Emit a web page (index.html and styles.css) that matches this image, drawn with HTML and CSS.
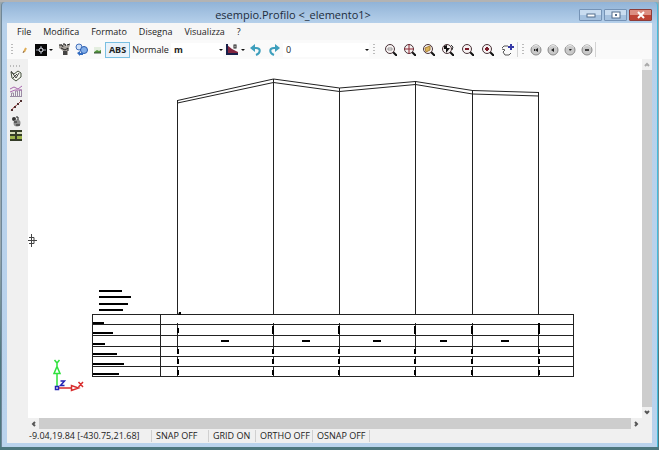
FILE: index.html
```html
<!DOCTYPE html>
<html lang="it">
<head>
<meta charset="utf-8">
<title>esempio.Profilo</title>
<link rel="stylesheet" href="styles.css">
</head>
<body>
<svg class="defs" aria-hidden="true">
  <defs>
    <g id="lens"><path d="M9 9l4 4" stroke="#111" stroke-width="2"/><circle cx="6" cy="6" r="4.500" fill="#f6f1f1" stroke="#4a3338"/></g>
    <g id="disc"><circle cx="6" cy="6" r="5" fill="#c9c9c9" stroke="#888"/><path d="M2 3.500a5 5 0 0 1 8 0" fill="none" stroke="#eee"/></g>
  </defs>
</svg>
<div class="window">
  <header class="titlebar">
    <h1>esempio.Profilo &lt;_elemento1&gt;</h1>
    <div class="controls">
      <button class="control" aria-label="Riduci"><svg width="12" height="8" viewBox="0 0 12 8"><rect x="2" y="3" width="8" height="3" fill="#fff" stroke="#526c8b"/></svg></button>
      <button class="control" aria-label="Ingrandisci"><svg width="12" height="8" viewBox="0 0 12 8"><rect x="2" y="1" width="8" height="6" fill="#fff" stroke="#526c8b"/><rect x="5" y="3" width="2" height="2" fill="#526c8b"/></svg></button>
      <button class="control close" aria-label="Chiudi"><svg width="12" height="8" viewBox="0 0 12 8"><path d="M3 1l6 6M9 1L3 7" stroke="#fff" stroke-width="2"/></svg></button>
    </div>
  </header>
  <div class="client">
    <nav class="menu">
      <button>File</button><button>Modifica</button><button>Formato</button><button>Disegna</button><button>Visualizza</button><button>?</button>
    </nav>
    <div class="toolbar">
      <span class="grip"></span>
      <button class="tool" aria-label="Matita"><svg width="8" height="12" viewBox="0 0 8 12"><path d="M3 8l2-4" stroke="#e0ad55" stroke-width="2"/><path d="M2 9l1-2" stroke="#8b6b4a"/></svg></button>
      <button class="tool" aria-label="Punto"><svg width="12" height="12" viewBox="0 0 12 12"><path d="M0 0h12v12H0z" fill="#080808"/><path d="M1 6h10M6 2v8" stroke="#9da4b3"/><circle cx="6" cy="6" r="2" fill="#080808" stroke="#e8ecf5"/></svg></button>
      <button class="drop" aria-label="Opzioni punto"></button>
      <button class="tool wide" aria-label="Sposta"><svg width="13" height="13" viewBox="0 0 13 13"><path d="M1 2l3-1 1 3V1h2l1 3 2-3 2 1-2 5v5H5V8L1 5z" fill="#a5a09a"/><path d="M1 2h3l1 2M5 1h2l1 2M9 2l3-1M3 5l4 2 3-2M10 5v3" fill="none" stroke="#222"/><path d="M5 8h4v4H5z" fill="#444"/></svg></button>
      <button class="tool" aria-label="Sfere"><svg width="13" height="13" viewBox="0 0 13 13"><circle cx="4" cy="4" r="3" fill="#cfe1f8" stroke="#4370bb"/><circle cx="9" cy="7" r="3.500" fill="#82aee9" stroke="#2a5cae"/><path d="M2 10l3-2v2h3v2H5v1z" fill="#316bc0"/></svg></button>
      <button class="tool" aria-label="Immagine"><svg width="9" height="8" viewBox="0 0 9 8"><path d="M1 1h7v4H1z" fill="#e4eee0"/><path d="M1 6l3-2 2 1 2-1v3H1z" fill="#51943b"/><path d="M1 7h7" stroke="#3f5140"/></svg></button>
      <button class="abs">ABS</button>
      <button class="style">Normale</button>
      <label class="combo unit"><select aria-label="Unità"><option>m</option></select></label>
      <button class="tool wide" aria-label="Quota"><svg width="12" height="12" viewBox="0 0 12 12"><path d="M1 0v11h11V8L6 5 1 1z" fill="#82243f"/><path d="M1 0v10h11" fill="none" stroke="#18204a" stroke-width="2"/><rect x="8" y="1" width="2" height="3" fill="none" stroke="#222"/></svg></button>
      <button class="drop" aria-label="Opzioni quota"></button>
      <button class="tool wide" aria-label="Annulla"><svg width="12" height="12" viewBox="0 0 12 12"><path d="M3 4h3c5 0 5 5 0 7" fill="none" stroke="#3e9fbd" stroke-width="2"/><path d="M5 0v8L0 4z" fill="#3e9fbd"/></svg></button>
      <button class="tool wide" aria-label="Ripeti"><svg width="12" height="12" viewBox="0 0 12 12"><path d="M9 4H6c-5 0-5 5 0 7" fill="none" stroke="#3e9fbd" stroke-width="2"/><path d="M7 0v8l5-4z" fill="#3e9fbd"/></svg></button>
      <label class="combo layer"><select aria-label="Livello"><option>0</option></select></label>
      <span class="grip spaced"></span>
      <button class="tool zoom" aria-label="Zoom finestra"><svg width="13" height="13" viewBox="0 0 13 13"><use href="#lens"/><path d="M4 5h4v2H4z" fill="none" stroke="#999"/></svg></button>
      <button class="tool zoom" aria-label="Zoom tutto"><svg width="13" height="13" viewBox="0 0 13 13"><use href="#lens"/><path d="M6 1v10M1 6h10" stroke="#8e2431"/></svg></button>
      <button class="tool zoom" aria-label="Zoom oggetto"><svg width="13" height="13" viewBox="0 0 13 13"><use href="#lens"/><path d="M3 5l5-2v4L4 9z" fill="#ddb456" stroke="#a87f38"/></svg></button>
      <button class="tool zoom" aria-label="Zoom precedente"><svg width="13" height="13" viewBox="0 0 13 13"><use href="#lens"/><path d="M3 3l3-1v3h3L5 10V6H3z" fill="#111"/><path d="M10 2l2 2-1 3" fill="none" stroke="#333"/></svg></button>
      <button class="tool step" aria-label="Riduci zoom"><svg width="13" height="13" viewBox="0 0 13 13"><use href="#lens"/><path d="M4 6h4" stroke="#7b1b2a" stroke-width="2"/></svg></button>
      <button class="tool step" aria-label="Aumenta zoom"><svg width="13" height="13" viewBox="0 0 13 13"><use href="#lens"/><path d="M4 6h4M6 4v4" stroke="#7b1b2a" stroke-width="2"/></svg></button>
      <button class="tool step" aria-label="Panoramica"><svg width="13" height="13" viewBox="0 0 13 13"><path d="M1 5l2-2h4l2 2M1 6l3 1-2 2 2 3h4l2-2" fill="none" stroke="#555"/><path d="M7 4h6M10 1v6" stroke="#3539a6" stroke-width="2"/></svg></button>
      <span class="rule"></span>
      <span class="grip narrow"></span>
      <button class="tool nav" aria-label="Primo"><svg width="12" height="12" viewBox="0 0 12 12"><use href="#disc"/><path d="M8 4v4L5 6z" fill="#222"/><path d="M4.500 5v2" stroke="#222"/></svg></button>
      <button class="tool nav" aria-label="Indietro"><svg width="12" height="12" viewBox="0 0 12 12"><use href="#disc"/><path d="M7 4v4L4 6z" fill="#222"/></svg></button>
      <button class="tool nav" aria-label="Avanti"><svg width="12" height="12" viewBox="0 0 12 12"><use href="#disc"/><path d="M5 5h3L6 7z" fill="#222"/></svg></button>
      <button class="tool nav" aria-label="Ultimo"><svg width="12" height="12" viewBox="0 0 12 12"><use href="#disc"/><path d="M4 5h4v2H4z" fill="#444"/></svg></button>
      <span class="rule"></span>
    </div>
    <div class="work">
      <aside class="side">
        <span class="side-grip"></span>
        <button aria-label="Spezzata"><svg width="12" height="12" viewBox="0 0 12 12"><path d="M1 2l3 2 4-3 3 2v4l-5 4-4-3z" fill="#f3f6ed" stroke="#46513f"/><path d="M1 1l5 7 3-5M3 8l4-4" fill="none" stroke="#444"/></svg></button>
        <button aria-label="Sezioni"><svg width="12" height="12" viewBox="0 0 12 12"><path d="M1.500 12V8h2v4M5.500 12V6h2v6M9.500 12V5h2v7M0 11.500h12" fill="none" stroke="#9b8ca5"/><path d="M0 4l4-2 4 2 4-3M0 7l5-2h7" fill="none" stroke="#a866ad"/></svg></button>
        <button aria-label="Linea"><svg width="12" height="12" viewBox="0 0 12 12"><path d="M1 11l3-4 3-2 4-4" fill="none" stroke="#ad4e4e"/><path d="M1 10h2M4 7h2M7 4h2M10 1h2" stroke="#503030" stroke-width="2"/></svg></button>
        <button aria-label="Oggetti"><svg width="12" height="12" viewBox="0 0 12 12"><circle cx="4" cy="4" r="2" fill="#333"/><circle cx="7" cy="8" r="3.500" fill="#8e8e8e"/><path d="M4 7h3M6 10h4M6 2h2v3" fill="none" stroke="#222"/></svg></button>
        <button aria-label="Tabella"><svg width="12" height="12" viewBox="0 0 12 12"><path d="M0 0h12v11H0z" fill="#343c27"/><path d="M0 2h5v2H0zM7 2h5v2H7z" fill="#d4dcb9"/><path d="M0 6h5v3H0zM7 6h5v3H7z" fill="#9bb34b"/></svg></button>
      </aside>
      <main class="canvas">
        <svg class="drawing" viewBox="28 59 614 359" preserveAspectRatio="xMinYMin meet" role="img" aria-label="Profilo">
          <g fill="none" stroke="#222">
            <path d="M177.500 100.500L273.500 79 339.500 88 415.500 81.500 472.500 90.500 539 92.500"/>
            <path d="M177.500 103L273.500 82.500 339.500 91.500 415.500 84.500 472.500 94 539 96"/>
            <path shape-rendering="crispEdges" d="M177.500 100V376M273.500 79V376M339.500 88V376M415.500 81V376M472.500 90V376M538.500 92V376"/>
          </g>
          <path fill="none" stroke="#fff" shape-rendering="crispEdges" d="M177.500 315v8M273.500 315v8M339.500 315v8M415.500 315v8M472.500 315v8M538.500 315v8M177.500 354v2M273.500 354v2M339.500 354v2M415.500 354v2M472.500 354v2M538.500 354v2M177.500 364v2M273.500 364v2M339.500 364v2M415.500 364v2M472.500 364v2M538.500 364v2"/>
          <path fill="none" stroke="#222" shape-rendering="crispEdges" d="M92.500 314.500H573.500V376.500H92.500zM160.500 314V376M92 324.500H573M92 335.500H573M92 346.500H573M92 356.500H573M92 366.500H573"/>
          <g fill="none" stroke="#000" stroke-width="2" shape-rendering="crispEdges">
            <path d="M99 291h23M99 297h32M99 304h29M99 310h24M93 323h11M93 333h20M93 344h12M93 354h24M93 364h31M93 374h26"/>
            <path d="M221 341h8M302 341h8M373 341h8M440 341h7M501 341h8"/>
          </g>
          <path fill="none" stroke="#000" stroke-width="2" shape-rendering="crispEdges" d="M178 328v5M273 326v8M339 326v8M415 326v8M472 326v8M539 323v11M178 349v5M273 349v5M339 349v5M415 349v5M472 349v5M539 349v5M178 359v5M273 359v5M339 359v5M415 359v5M472 359v5M539 359v5M178 370v5M273 370v5M339 370v5M415 370v5M472 370v5M539 370v5"/>
          <path d="M178 315l1-3h2v3z"/>
          <path d="M28 240.500h9M31.500 234v13M29 237.500h5v6h-5" fill="none" stroke="#444"/>
          <g fill="none" stroke-width="1.500">
            <path d="M57 386V374M54 373.500h6l-3-7zM54.500 360l2.500 3 2.500-3M57 363v3" stroke="#2fe13d"/>
            <path d="M59 388h12M71.500 385.500v5l7-2.500zM78.500 382l4.500 5M83 382l-4.500 5" stroke="#d82c2c"/>
            <path d="M55.500 386.500h3v3h-3zM60.500 381h4l-4 4.500h4" stroke="#2424b5"/>
          </g>
        </svg>
      </main>
      <div class="scroll vertical"><button aria-label="Su"><svg width="6" height="5" viewBox="0 0 6 5"><path d="M1 4l2-2 2 2" fill="none" stroke="#aaa" stroke-width="2"/></svg></button><span class="thumb"></span><button aria-label="Giù"><svg width="6" height="5" viewBox="0 0 6 5"><path d="M1 1l2 2 2-2" fill="none" stroke="#555" stroke-width="2"/></svg></button></div>
      <div class="scroll horizontal"><button aria-label="Sinistra"><svg width="5" height="6" viewBox="0 0 5 6"><path d="M4 1L2 3l2 2" fill="none" stroke="#555" stroke-width="2"/></svg></button><span class="thumb"></span><button aria-label="Destra"><svg width="5" height="6" viewBox="0 0 5 6"><path d="M1 1l2 2-2 2" fill="none" stroke="#555" stroke-width="2"/></svg></button></div>
    </div>
    <footer class="status">
      <span class="coords">-9.04,19.84 [-430.75,21.68]</span><span class="snap">SNAP OFF</span><span class="grid">GRID ON</span><span class="snap">ORTHO OFF</span><span class="snap">OSNAP OFF</span>
    </footer>
  </div>
</div>
</body>
</html>
```
FILE: styles.css
```css
* { box-sizing: border-box; }
html, body { height: 100%; }
body {
  margin: 0;
  padding: 2px 1px 3px 1px;
  background: linear-gradient(#b3b3b3 0 2px, #9aa8ae 2px 55%, #4d777e 80%);
  font: 9px/12px "Open Sans", "Noto Sans", sans-serif;
  color: #222;
}
button, select { font: inherit; color: inherit; border: 0; margin: 0; padding: 0; background: none; }
svg { display: block; flex: none; }
.defs { position: absolute; width: 0; height: 0; }
.window {
  height: 100%;
  display: flex;
  flex-direction: column;
  padding: 0 5px 4px;
  background: linear-gradient(#91b3d7, #b7d1eb 22px, #bad3ed);
  border: solid #6f8798;
  border-width: 0 0 0 1px;
  border-right: 1px solid #45bcdc;
  border-radius: 4px 4px 0 0;
}
.titlebar { display: flex; height: 21px; align-items: center; flex: none; }
.titlebar h1 { flex: 1; margin: 0; padding-top: 5px; font-size: 11px; line-height: 16px; font-weight: 400; text-align: center; color: #202c3c; }
.controls { display: flex; gap: 2px; padding: 4px 0 0; }
.control { width: 23px; height: 12px; display: grid; place-items: center; border: 1px solid #7593b6; border-radius: 1px; background: linear-gradient(#c9dcf0 50%, #a5c1df 50%); }
.control.close { border-color: #8e3c38; background: linear-gradient(#dc8e82 50%, #bd4335 50%); }
.client { flex: 1; min-height: 0; display: flex; flex-direction: column; background: #f0f0f0; }
.menu { display: flex; gap: 12px; height: 17px; padding-left: 10px; align-items: center; background: #f6f6f6; flex: none; }
.toolbar { display: flex; align-items: center; height: 19px; background: #fafafa; flex: none; }
.grip { width: 10px; height: 11px; flex: none; background: repeating-linear-gradient(#bbb 0 1px, transparent 1px 3px) 4px 0 / 2px 100% no-repeat; }
.grip.narrow { width: 9px; }
.grip.spaced { width: 12px; }
.rule { width: 1px; height: 15px; background: #d4d4d4; flex: none; }
.tool { width: 16px; height: 16px; display: grid; place-items: center; flex: none; }
.tool.nav { width: 17px; }
.tool.wide { width: 18px; }
.tool.zoom { width: 19px; }
.tool.step { width: 20px; }
.drop { width: 6px; height: 16px; flex: none; }
.drop::before, .combo::after { content: ""; display: block; width: 0; border: 2px solid transparent; border-top-color: #111; border-bottom: 0; flex: none; }
.abs { width: 25px; height: 16px; border: 1px solid #79bfe2; background: #e9f2fa; font-weight: 700; flex: none; }
.style { width: 41px; height: 16px; flex: none; }
.combo { display: flex; align-items: center; height: 14px; background: #fff; flex: none; }
.combo select { appearance: none; flex: 1; min-width: 0; padding-left: 3px; }
.combo.unit { width: 52px; font-weight: 700; }
.combo.layer { width: 86px; }
.work { flex: 1; min-height: 0; display: grid; grid-template: minmax(0, 1fr) 11px / 21px minmax(0, 1fr) 10px; }
.side { grid-row: 1 / 3; display: flex; flex-direction: column; align-items: center; gap: 3px; padding: 6px 3px 0 0; }
.side button { height: 12px; }
.side-grip { width: 12px; height: 2px; background: repeating-linear-gradient(90deg, #bbb 0 1px, transparent 1px 3px); }
.canvas { background: #fff; overflow: hidden; }
.drawing { width: 100%; height: 100%; }
.scroll { display: flex; background: #f0f0f0; }
.scroll button { display: grid; place-items: center; width: 11px; height: 11px; flex: none; }
.scroll .thumb { flex: 1; background: #cdcdcd; }
.vertical { flex-direction: column; }
.vertical button { width: 10px; }
.horizontal { grid-column: 2; }
.status { display: flex; height: 14px; padding-left: 18px; align-items: center; flex: none; }
.status span { border-right: 1px solid #d0d0d0; padding-left: 4px; white-space: nowrap; }
.status .coords { width: 127px; }
.status .snap { width: 57px; }
.status .grid { width: 47px; }
```
